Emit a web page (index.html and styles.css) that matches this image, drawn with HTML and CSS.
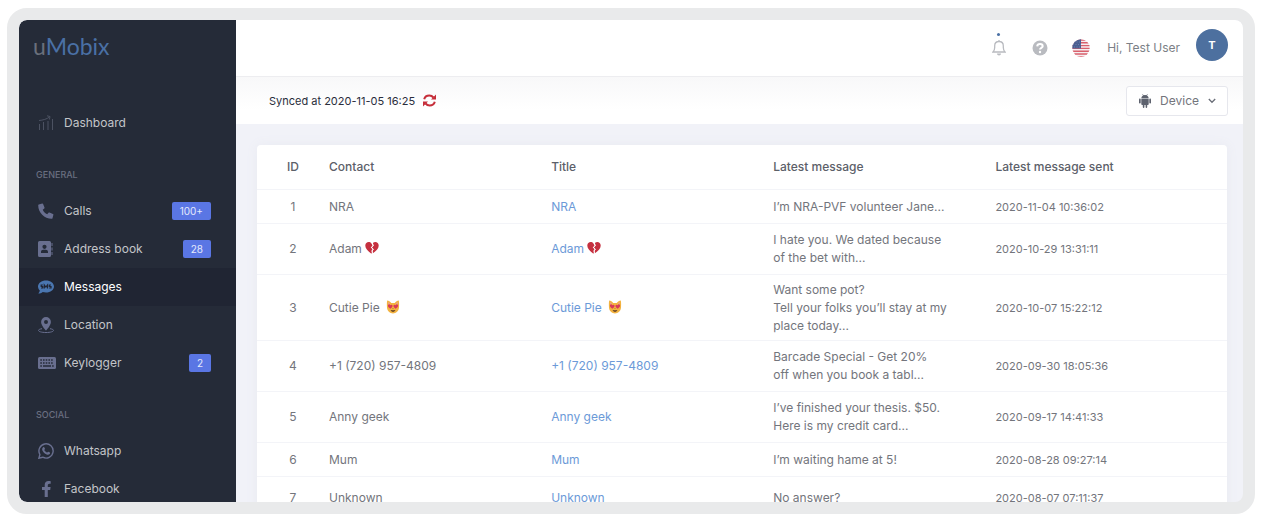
FILE: index.html
```html
<!DOCTYPE html>
<html lang="en">
<head>
<meta charset="utf-8">
<meta name="viewport" content="width=device-width, initial-scale=1">
<title>uMobix – Messages</title>
<link rel="stylesheet" href="styles.css">
</head>
<body>
<svg class="defs" aria-hidden="true">
  <symbol id="heart" viewBox="0 0 24 24">
    <path fill="#c5303f" d="M11 22C5 17 .5 13 .5 8 .5 1 8 0 11 4l2 4-3 3 3 3-2 3 1 2z"/>
    <path fill="#c5303f" d="M13.500 21C19 17 23.500 13 23.500 8 23.500 1 16.500 0 13.500 3.500l1.500 4-3 3.500 3 3-2 3z"/>
    <path fill="none" stroke="#fff" stroke-width="1.300" d="M12 4l2 4-3 3 3 3-2 3 1 4"/>
  </symbol>
  <symbol id="cat" viewBox="0 0 24 24">
    <path fill="#f3b340" d="M2 1c3 0 5 2 7 4h6c2-2 4-4 7-4 .8 5 .4 9 .3 12C22 19 17 23 12 23S2 19 1.700 13C1.600 9 1.200 5 2 1z"/>
    <path fill="#e9a08a" d="M3.500 3l3.500 3-3 3zM20.500 3L17 6l3 3z"/>
    <path fill="#d93a58" d="M7.500 15C4 12.500 2.500 10.500 3.500 8.500c1-1.700 3.300-1.200 3.900.4 1-1.400 3.400-1.200 3.800.6.400 2.200-1.500 4-3.700 5.500zM16.500 15c3.500-2.500 5-4.500 4-6.500-1-1.700-3.300-1.200-3.900.4-1-1.400-3.400-1.200-3.800.6-.4 2.200 1.500 4 3.700 5.500z"/>
    <path fill="#5b3a22" d="M11 14h2l-1 1.500zM8 17c2.500.8 5.500.8 8 0-.4 2-2 3-4 3s-3.600-1-4-3z"/>
  </symbol>
</svg>
<div class="device">
  <aside class="sidebar">
    <a class="logo" href="#"><span class="logo-u">u</span>Mobix</a>
    <nav class="nav" aria-label="Main">
      <a class="nav-item" href="#">
        <svg class="icon dim" viewBox="0 0 16 16" fill="none" stroke="currentColor"><path d="M1.500 15V9M5.500 15V7M10 15V6M14.500 15V4M1 5.500c4-.3 8-1.500 10.500-3.500M9 .8l3 .7-.6 3"/></svg>
        <span>Dashboard</span>
      </a>
      <h2 class="nav-heading">GENERAL</h2>
      <a class="nav-item" href="#">
        <svg class="icon" viewBox="0 0 16 16" fill="currentColor"><path d="M.8 1.500L4.200.6c.4-.1.8.1.900.5l1.400 3.400c.2.400 0 .8-.2 1L4.700 6.800c1 2 2.500 3.500 4.500 4.500l1.300-1.600c.3-.3.7-.4 1-.2l3.400 1.400c.4.200.6.500.5.900l-.9 3.400c-.1.400-.4.600-.8.600C6.400 15.800.2 9.600.2 2.300c0-.4.2-.7.600-.8z"/></svg>
        <span>Calls</span><span class="badge">100+</span>
      </a>
      <a class="nav-item" href="#">
        <svg class="icon" viewBox="0 0 16 16" fill="currentColor"><path fill-rule="evenodd" d="M1.500 0h10A1.500 1.500 0 0 1 13 1.500v13a1.500 1.500 0 0 1-1.500 1.500h-10A1.500 1.500 0 0 1 0 14.500v-13A1.500 1.500 0 0 1 1.500 0zm5 3.700a2.100 2.100 0 1 0 0 4.200 2.100 2.100 0 0 0 0-4.200zM3 12h7v-1c0-1.400-1-2.300-2.200-2.300H5.200C4 8.700 3 9.600 3 11z"/><path d="M13.500 2h1v3h-1zM13.500 6.500h1v3h-1zM13.500 11h1v3h-1z"/></svg>
        <span>Address book</span><span class="badge">28</span>
      </a>
      <a class="nav-item active" href="#" aria-current="page">
        <svg class="icon blue" viewBox="0 0 16 16"><path fill="currentColor" d="M8 1.500c4.400 0 8 2.600 8 6s-3.600 6-8 6c-1.200 0-2.300-.2-3.300-.5C3.500 14 2 14.500.3 14.500c.8-.9 1.400-2 1.500-3C.7 10.500 0 9 0 7.500c0-3.400 3.600-6 8-6z"/><path fill="none" stroke="#202533" stroke-width="1.200" d="M4.800 6H3.200v1.500h1.500V9H3M6.300 9.500V6l1.600 2 1.600-2v3.500M13 6h-1.700v1.500H13V9h-1.800"/></svg>
        <span>Messages</span>
      </a>
      <a class="nav-item" href="#">
        <svg class="icon" viewBox="0 0 16 16" fill="currentColor"><path fill-rule="evenodd" d="M8 0a4.900 4.900 0 0 1 4.900 4.900C12.900 8.500 8 13.500 8 13.500S3.100 8.500 3.100 4.900A4.900 4.900 0 0 1 8 0zm0 3a2 2 0 1 0 0 4 2 2 0 0 0 0-4z"/><path fill="none" stroke="currentColor" d="M4 11.700c-2 .3-3.500.9-3.500 1.700 0 1.200 3 2.100 7.500 2.100s7.500-.9 7.500-2.100c0-.8-1.500-1.400-3.500-1.700"/></svg>
        <span>Location</span>
      </a>
      <a class="nav-item" href="#">
        <svg class="icon wide" viewBox="0 0 18 16"><rect y="2" width="18" height="12" rx="1.500" fill="currentColor"/><path fill="none" stroke="#252b38" stroke-width="1.500" stroke-dasharray="1.600 1.100" d="M2.300 5h13.400M2.300 8h13.400"/><path stroke="#252b38" stroke-width="1.500" d="M2.300 11h1.600M5 11h8M14.100 11h1.600"/></svg>
        <span>Keylogger</span><span class="badge">2</span>
      </a>
      <h2 class="nav-heading">SOCIAL</h2>
      <a class="nav-item" href="#">
        <svg class="icon" viewBox="0 0 16 16" fill="none" stroke="currentColor" stroke-width="1.400"><path d="M.9 15.200l1-3.700a7.100 7.100 0 1 1 2.800 2.700z"/><path fill="currentColor" stroke="none" d="M5.400 4c.5-.2.9 0 1 .4l.6 1.300c.1.300-.5.900-.7 1.200.7 1.300 1.600 2.100 3 2.700.4-.3.700-1 1.100-.9l1.500.7c.4.200.1 1.200-.2 1.600-.8.800-1.900.9-3 .5C6.500 10.700 5 9.200 4.300 7.300 3.900 6 4.300 4.700 5.400 4z"/></svg>
        <span>Whatsapp</span>
      </a>
      <a class="nav-item" href="#">
        <svg class="icon" viewBox="0 0 16 16" fill="currentColor"><path d="M12.200 9l.4-2.900H9.800V4.300c0-.8.4-1.600 1.600-1.600h1.300V.2S11.600 0 10.500 0C8.200 0 6.700 1.400 6.700 3.900v2.200H4V9h2.700v7h3.100V9z"/></svg>
        <span>Facebook</span>
      </a>
    </nav>
  </aside>
  <main class="main">
    <header class="topbar">
      <button class="icon-button bell" type="button" aria-label="Notifications">
        <svg width="14" height="24" viewBox="0 0 14 24"><circle cx="6.500" cy="1.500" r="1.500" fill="#4a70a5"/><path fill="none" stroke="#b9bbc0" stroke-width="1.300" d="M1 19h12c-1.200-1.200-1.700-2.200-1.700-4.500v-1.700C11.300 10 9.800 8.500 7 8.500S2.700 10 2.700 12.800v1.700c0 2.300-.5 3.300-1.700 4.500zM7 7v1.500"/><path fill="#b9bbc0" d="M5 20.500h4c0 1-.8 2-2 2s-2-1-2-2z"/></svg>
      </button>
      <button class="icon-button" type="button" aria-label="Help">
        <svg width="16" height="16" viewBox="0 0 16 16"><circle cx="8" cy="8" r="7.500" fill="#b9bbc0"/><path fill="none" stroke="#fff" stroke-width="2" d="M5.200 6.300c.2-1.600 1.300-2.300 2.800-2.300s2.700.8 2.700 2.200C10.700 7.900 8 7.800 8 9.600"/><circle cx="8" cy="12" r="1.200" fill="#fff"/></svg>
      </button>
      <button class="icon-button language" type="button" aria-label="Language: English">
        <svg width="18" height="18" viewBox="0 0 18 18"><clipPath id="disc"><circle cx="9" cy="9" r="8.700"/></clipPath><g clip-path="url(#disc)"><path fill="#f5eef0" d="M0 0h18v18H0z"/><path stroke="#d9606c" stroke-width="1.400" d="M0 1h18M0 3.800h18M0 6.600h18M0 9.400h18M0 12.200h18M0 15h18M0 17.600h18"/><path fill="#4a5f92" d="M0 0h9v9.500H0z"/><path stroke="#7080a9" stroke-dasharray="1 1.500" d="M2 3h7M1 5.500h8M2 8h7"/></g></svg>
      </button>
      <span class="greeting">Hi, Test User</span>
      <button class="avatar" type="button" aria-label="Account">T</button>
    </header>
    <div class="syncbar">
      <p class="sync">Synced at 2020-11-05 16:25</p>
      <button class="icon-button refresh" type="button" aria-label="Refresh">
        <svg width="13" height="13" viewBox="0 0 13 13"><path fill="none" stroke="#c62f3b" stroke-width="2" d="M1.200 5.200C1.800 2.900 4 1.500 6.300 1.500c1.700 0 3.100.7 4.200 2M11.800 7.800c-.6 2.300-2.800 3.700-5.100 3.700-1.700 0-3.100-.7-4.200-2"/><path fill="#c62f3b" d="M13 .5v5H8zM0 12.500v-5h5z"/></svg>
      </button>
      <button class="device-button" type="button">
        <svg width="12" height="14" viewBox="0 0 12 14" fill="#5d626e"><path d="M2.300 4.300C2.500 2.800 3.300 1.900 4 1.500L3.300.3l.4-.2.800 1.200a4 4 0 0 1 3 0L8.300.1l.4.200L8 1.500c.7.400 1.500 1.300 1.700 2.800zM2.300 4.800h7.400v5.400c0 .5-.4.800-.8.800h-.7v2c0 1.200-1.600 1.200-1.600 0v-2H5.400v2c0 1.200-1.600 1.200-1.600 0v-2h-.7c-.4 0-.8-.3-.8-.8z"/><rect y="4.600" width="1.700" height="5" rx=".8"/><rect x="10.300" y="4.600" width="1.700" height="5" rx=".8"/></svg>
        <span>Device</span>
        <svg width="8" height="6" viewBox="0 0 8 6" fill="none" stroke="#6b6f79" stroke-width="1.300"><path d="M.8 1L4 4.300 7.200 1"/></svg>
      </button>
    </div>
    <div class="content">
      <table class="messages">
        <colgroup><col class="col-id"><col class="col"><col class="col"><col class="col"><col class="col-sent"></colgroup>
        <thead>
          <tr><th scope="col">ID</th><th scope="col">Contact</th><th scope="col">Title</th><th scope="col">Latest message</th><th scope="col">Latest message sent</th></tr>
        </thead>
        <tbody>
          <tr><td>1</td><td>NRA</td><td><a href="#">NRA</a></td><td>I’m NRA-PVF volunteer Jane...</td><td>2020-11-04 10:36:02</td></tr>
          <tr class="two"><td>2</td><td>Adam <svg class="emoji" role="img" aria-label="broken heart"><use href="#heart"/></svg></td><td><a href="#">Adam <svg class="emoji" role="img" aria-label="broken heart"><use href="#heart"/></svg></a></td><td>I hate you. We dated because<br>of the bet with...</td><td>2020-10-29 13:31:11</td></tr>
          <tr class="three"><td>3</td><td>Cutie Pie <svg class="emoji cat" role="img" aria-label="heart eyes cat"><use href="#cat"/></svg></td><td><a href="#">Cutie Pie <svg class="emoji cat" role="img" aria-label="heart eyes cat"><use href="#cat"/></svg></a></td><td>Want some pot?<br>Tell your folks you’ll stay at my<br>place today...</td><td>2020-10-07 15:22:12</td></tr>
          <tr class="two"><td>4</td><td>+1 (720) 957-4809</td><td><a href="#">+1 (720) 957-4809</a></td><td>Barcade Special - Get 20%<br>off when you book a tabl...</td><td>2020-09-30 18:05:36</td></tr>
          <tr class="two"><td>5</td><td>Anny geek</td><td><a href="#">Anny geek</a></td><td>I’ve finished your thesis. $50.<br>Here is my credit card...</td><td>2020-09-17 14:41:33</td></tr>
          <tr><td>6</td><td>Mum</td><td><a href="#">Mum</a></td><td>I’m waiting hame at 5!</td><td>2020-08-28 09:27:14</td></tr>
          <tr class="last"><td>7</td><td>Unknown</td><td><a href="#">Unknown</a></td><td>No answer?</td><td>2020-08-07 07:11:37</td></tr>
        </tbody>
      </table>
    </div>
  </main>
</div>
</body>
</html>
```
FILE: styles.css
```css
* { box-sizing: border-box; }

body {
  margin: 0;
  height: 100vh;
  padding: 8px 7px 10px;
  overflow: hidden;
  background: #fff;
  color: #73757c;
  font: 12px/18px Inter, "Open Sans", sans-serif;
}

a { color: inherit; text-decoration: none; }

button {
  padding: 0;
  border: 0;
  background: none;
  color: inherit;
  font: inherit;
  cursor: pointer;
}

.defs { display: none; }

.device {
  display: flex;
  height: 100%;
  overflow: hidden;
  border: 12px solid #e9eaeb;
  border-radius: 20px;
  background: #f1f2f8;
}

.sidebar {
  flex: 0 0 217px;
  overflow: hidden;
  border-radius: 8px 0 0 8px;
  background: #252b38;
}

.logo {
  display: block;
  padding: 12px 14px 44px;
  color: #4a70a5;
  font: 23px/28px Lato, sans-serif;
}

.logo-u { color: #6a6f7b; }

.nav-item {
  display: flex;
  align-items: center;
  height: 38px;
  padding: 0 25px 0 19px;
  color: #c3c5c9;
}

.nav-item.active { background: #202533; color: #fff; }

.icon {
  width: 16px;
  height: 16px;
  margin-right: 10px;
  color: #696f8f;
}

.icon.wide { width: 18px; margin-right: 8px; }
.icon.dim { color: #4c5262; }
.icon.blue { color: #4a76b0; }

.nav-heading {
  margin: 0;
  padding: 24px 17px 8px;
  color: #6a6f80;
  font-size: 9px;
  font-weight: 500;
  line-height: 18px;
}

.badge {
  margin-left: auto;
  padding: 0 8px;
  border-radius: 2px;
  background: #5a76e4;
  color: #e4e9fc;
  font-size: 10px;
}

.main {
  display: flex;
  flex: 1;
  flex-direction: column;
  min-width: 0;
  overflow: hidden;
  border-radius: 0 8px 8px 0;
}

.topbar {
  display: flex;
  flex: none;
  align-items: center;
  justify-content: flex-end;
  height: 57px;
  padding: 0 15px;
  border-bottom: 1px solid #ededf0;
  background: #fff;
}

.icon-button { display: flex; margin-right: 24px; }
.bell { margin-right: 26px; margin-bottom: 6px; }
.language { margin-right: 17px; }

.greeting { margin-right: 16px; color: #7c7f86; }

.avatar {
  width: 32px;
  height: 32px;
  margin-bottom: 6px;
  border-radius: 50%;
  background: #4d709f;
  color: #fff;
  font-size: 11px;
  font-weight: 700;
}

.syncbar {
  display: flex;
  flex: none;
  align-items: center;
  height: 47px;
  padding: 0 15px 0 33px;
  background: linear-gradient(#f8f8f9, #fff 70%);
}

.sync { margin: 0 8px 0 0; color: #2a2e3c; font-size: 11px; }

.device-button {
  display: flex;
  align-items: center;
  gap: 9px;
  height: 30px;
  margin-left: auto;
  padding: 0 11px 0 12px;
  border: 1px solid #e6e7ed;
  border-radius: 3px;
  background: #fff;
}

.content { flex: 1; padding: 21px 16px 0 21px; }

.messages {
  width: 100%;
  border-collapse: separate;
  border-spacing: 0;
  border-radius: 4px 4px 0 0;
  background: #fff;
  box-shadow: 0 0 12px #e9eaf1;
  table-layout: fixed;
}

.col-id { width: 72px; }
.col { width: 22.9%; }

th {
  height: 45px;
  padding: 0;
  border-bottom: 1px solid #f3f4f8;
  color: #5c6069;
  font-weight: 500;
  text-align: left;
}

td {
  height: 34px;
  padding: 0;
  border-bottom: 1px solid #f3f4f8;
  white-space: nowrap;
}

.two td { height: 51px; }
.three td { height: 66px; }
.last td { height: 42px; }

th:first-child, td:first-child { text-align: center; }
td:last-child { font-size: 11px; }
td a { color: #6c9ad8; }

.emoji { width: 14px; height: 14px; vertical-align: -2px; }
.emoji.cat { margin-left: 3px; }
```
